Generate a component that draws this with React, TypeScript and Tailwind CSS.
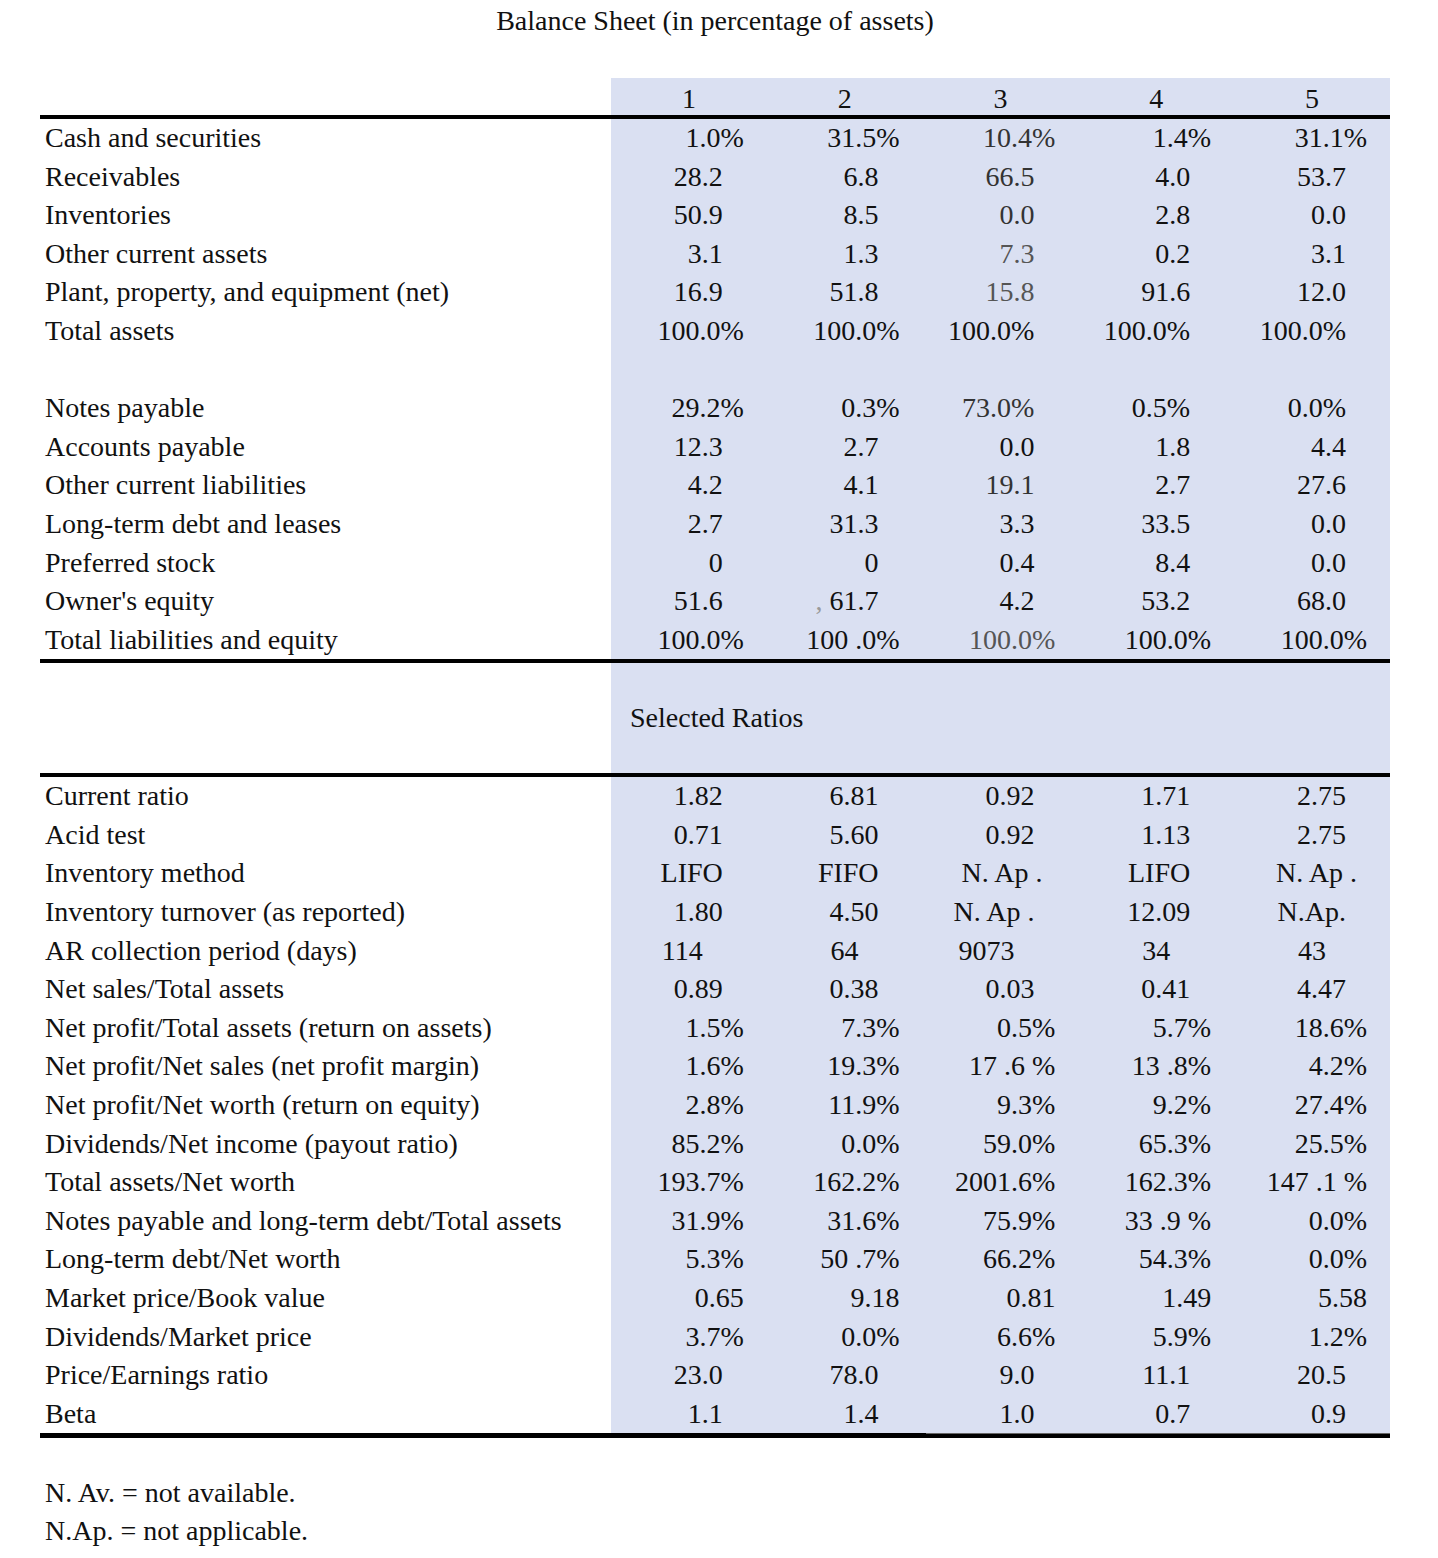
import React from "react";

type Cell = [string, string, string?];

const A = "pr-[23px]";
const B = "pr-[44px]";
const C = "pr-[64px]";
const D = "pr-[36px]";
const E = "pr-[33px]";

const balanceRows: (null | [string, Cell[]])[] = [
  ["Cash and securities", [["1.0%", A], ["31.5%", A], ["10.4%", A, "text-[#333]"], ["1.4%", A], ["31.1%", A]]],
  ["Receivables", [["28.2", B], ["6.8", B], ["66.5", B, "text-[#333]"], ["4.0", B], ["53.7", B]]],
  ["Inventories", [["50.9", B], ["8.5", B], ["0.0", B, "text-[#333]"], ["2.8", B], ["0.0", B]]],
  ["Other current assets", [["3.1", B], ["1.3", B], ["7.3", B, "text-[#555]"], ["0.2", B], ["3.1", B]]],
  ["Plant, property, and equipment (net)", [["16.9", B], ["51.8", B], ["15.8", B, "text-[#555]"], ["91.6", B], ["12.0", B]]],
  ["Total assets", [["100.0%", A], ["100.0%", A], ["100.0%", B], ["100.0%", B], ["100.0%", B]]],
  null,
  ["Notes payable", [["29.2%", A], ["0.3%", A], ["73.0%", B, "text-[#333]"], ["0.5%", B], ["0.0%", B]]],
  ["Accounts payable", [["12.3", B], ["2.7", B], ["0.0", B], ["1.8", B], ["4.4", B]]],
  ["Other current liabilities", [["4.2", B], ["4.1", B], ["19.1", B, "text-[#333]"], ["2.7", B], ["27.6", B]]],
  ["Long-term debt and leases", [["2.7", B], ["31.3", B], ["3.3", B], ["33.5", B], ["0.0", B]]],
  ["Preferred stock", [["0", B], ["0", B], ["0.4", B], ["8.4", B], ["0.0", B]]],
  ["Owner's equity", [["51.6", B], ["COMMA61.7", B], ["4.2", B], ["53.2", B], ["68.0", B]]],
  ["Total liabilities and equity", [["100.0%", A], ["100 .0%", A], ["100.0%", A, "text-[#555]"], ["100.0%", A], ["100.0%", A]]],
];

const ratioRows: [string, Cell[]][] = [
  ["Current ratio", [["1.82", B], ["6.81", B], ["0.92", B], ["1.71", B], ["2.75", B]]],
  ["Acid test", [["0.71", B], ["5.60", B], ["0.92", B], ["1.13", B], ["2.75", B]]],
  ["Inventory method", [["LIFO", B], ["FIFO", B], ["N. Ap .", D], ["LIFO", B], ["N. Ap .", E]]],
  ["Inventory turnover (as reported)", [["1.80", B], ["4.50", B], ["N. Ap .", B], ["12.09", B], ["N.Ap.", B]]],
  ["AR collection period (days)", [["114", C], ["64", C], ["9073", C], ["34", C], ["43", C]]],
  ["Net sales/Total assets", [["0.89", B], ["0.38", B], ["0.03", B], ["0.41", B], ["4.47", B]]],
  ["Net profit/Total assets (return on assets)", [["1.5%", A], ["7.3%", A], ["0.5%", A], ["5.7%", A], ["18.6%", A]]],
  ["Net profit/Net sales (net profit margin)", [["1.6%", A], ["19.3%", A], ["17 .6 %", A], ["13 .8%", A], ["4.2%", A]]],
  ["Net profit/Net worth (return on equity)", [["2.8%", A], ["11.9%", A], ["9.3%", A], ["9.2%", A], ["27.4%", A]]],
  ["Dividends/Net income (payout ratio)", [["85.2%", A], ["0.0%", A], ["59.0%", A], ["65.3%", A], ["25.5%", A]]],
  ["Total assets/Net worth", [["193.7%", A], ["162.2%", A], ["2001.6%", A], ["162.3%", A], ["147 .1 %", A]]],
  ["Notes payable and long-term debt/Total assets", [["31.9%", A], ["31.6%", A], ["75.9%", A], ["33 .9 %", A], ["0.0%", A]]],
  ["Long-term debt/Net worth", [["5.3%", A], ["50 .7%", A], ["66.2%", A], ["54.3%", A], ["0.0%", A]]],
  ["Market price/Book value", [["0.65", A], ["9.18", A], ["0.81", A], ["1.49", A], ["5.58", A]]],
  ["Dividends/Market price", [["3.7%", A], ["0.0%", A], ["6.6%", A], ["5.9%", A], ["1.2%", A]]],
  ["Price/Earnings ratio", [["23.0", B], ["78.0", B], ["9.0", B], ["11.1", B], ["20.5", B]]],
  ["Beta", [["1.1", B], ["1.4", B], ["1.0", B], ["0.7", B], ["0.9", B]]],
];

function ValueCell({ cell }: { cell: Cell }) {
  const [text, align, color] = cell;
  const content =
    text === "COMMA61.7" ? (
      <>
        <span className="text-[#999]">,</span> 61.7
      </>
    ) : (
      text
    );
  return (
    <div className={`bg-[#dae0f2] text-right whitespace-pre ${align} ${color ?? ""}`}>{content}</div>
  );
}

function Row({ label, cells }: { label: string; cells: Cell[] }) {
  return (
    <div className="grid grid-cols-[571px_repeat(5,1fr)] h-[38.6px] leading-[38.6px]">
      <div className="pl-[5px] whitespace-nowrap">{label}</div>
      {cells.map((c, i) => (
        <ValueCell key={i} cell={c} />
      ))}
    </div>
  );
}

function BlankRow() {
  return (
    <div className="grid grid-cols-[571px_1fr] h-[38.6px]">
      <div />
      <div className="bg-[#dae0f2]" />
    </div>
  );
}

export default function App() {
  return (
    <div className="w-[1438px] h-[1558px] bg-white text-[#111] text-[28px] font-['Liberation_Serif','Times_New_Roman',serif]">
      <div className="ml-[40px] w-[1350px] pt-[2px]">
        <div className="h-[38.7px] leading-[38.7px] text-center">Balance Sheet (in percentage of assets)</div>

        <div className="mt-[37.3px] grid grid-cols-[571px_repeat(5,1fr)] h-[37px]">
          <div />
          {["1", "2", "3", "4", "5"].map((h) => (
            <div key={h} className="bg-[#dae0f2] text-center h-[37px] pt-[2px] leading-[38px]">
              {h}
            </div>
          ))}
        </div>
        <div className="h-[4px] bg-black" />

        {balanceRows.map((r, i) =>
          r ? <Row key={i} label={r[0]} cells={r[1]} /> : <BlankRow key={i} />
        )}

        <div className="h-[4px] bg-black" />

        <div className="grid grid-cols-[571px_1fr] h-[110px]">
          <div />
          <div className="bg-[#dae0f2] flex items-center pl-[19px] leading-[38.6px]">Selected Ratios</div>
        </div>

        <div className="h-[4px] bg-black" />

        {ratioRows.map((r, i) => (
          <Row key={i} label={r[0]} cells={r[1]} />
        ))}

        <div className="flex h-[5px]">
          <div className="w-[886px] h-[5px] bg-black" />
          <div className="flex-1 flex flex-col">
            <div className="h-[1px] bg-[#666]" />
            <div className="h-[4px] bg-black" />
          </div>
        </div>

        <div className="mt-[35.4px] pl-[5px] leading-[38px]">
          <div>N. Av. = not available.</div>
          <div>N.Ap. = not applicable.</div>
        </div>
      </div>
    </div>
  );
}
